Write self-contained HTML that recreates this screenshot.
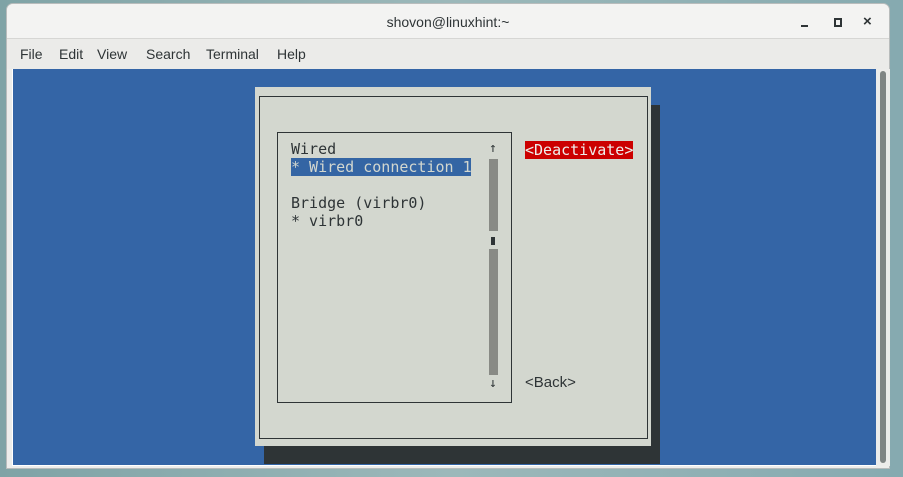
<!DOCTYPE html>
<html><head><meta charset="utf-8"><style>
*{margin:0;padding:0;box-sizing:border-box}
body{width:903px;height:477px;overflow:hidden;background:linear-gradient(90deg,#7fa3a6,#9cb8ba 50%,#86aab0);position:relative;font-family:"Liberation Sans",sans-serif}
.win{position:absolute;left:6px;top:3px;width:884px;height:466px;background:#ededeb;border-radius:7px 7px 0 0;overflow:hidden;border:1px solid #b8bcbc}
.title{position:absolute;left:0;top:0;width:100%;height:35px;background:#f3f3f2;border-bottom:1px solid #d6d6d4;text-align:center;font-size:14px;line-height:36px;color:#2e3436}
.menu{position:absolute;left:0;top:35px;width:100%;height:30px;background:#ebebe9;font-size:14px;color:#2e3436;line-height:30px}
.menu span{position:absolute}
.term{position:absolute;left:12px;top:69px;width:865px;height:397px;background:#3465a6;border:1px solid #fff;border-top:none}
.sb{position:absolute;left:876px;top:69px;width:14px;height:397px;background:#ececea}
.sb div{position:absolute;left:4px;top:2px;width:6px;height:392px;background:#7f8584;border-radius:3px}
.m{font-family:"DejaVu Sans Mono","Liberation Mono",monospace;font-size:15px;color:#2e3436;position:absolute;white-space:pre;line-height:18px}
</style></head><body>
<div class="win">
<div class="title">shovon@linuxhint:~
<div style="position:absolute;left:794px;top:21px;width:7px;height:2px;background:#2e3436"></div>
<div style="position:absolute;left:827px;top:14px;width:8px;height:9px;border:2px solid #2e3436"></div>
<div style="position:absolute;left:856px;top:10px;font-size:15px;line-height:16px;font-weight:bold">×</div>
</div>
<div class="menu"><span style="left:13px">File</span><span style="left:52px">Edit</span><span style="left:90px">View</span><span style="left:139px">Search</span><span style="left:199px">Terminal</span><span style="left:270px">Help</span></div>
</div>
<div class="term"></div>
<div class="sb"><div></div></div>
<div style="position:absolute;left:264px;top:105px;width:396px;height:359px;background:#2e3436"></div>
<div style="position:absolute;left:255px;top:87px;width:396px;height:359px;background:#d3d7cf"></div>
<div style="position:absolute;left:259px;top:96px;width:389px;height:343px;border:1px solid #2e3436"></div>
<div style="position:absolute;left:277px;top:132px;width:235px;height:271px;border:1px solid #2e3436"></div>
<div class="m" style="left:291px;top:140px">Wired</div>
<div class="m" style="left:291px;top:158px;background:#3465a4;color:#d3d7cf;width:180px">* Wired connection 1</div>
<div class="m" style="left:291px;top:194px">Bridge (virbr0)</div>
<div class="m" style="left:291px;top:212px">* virbr0</div>
<div class="m" style="left:489px;top:140px;font-size:13px">↑</div>
<div style="position:absolute;left:489px;top:159px;width:9px;height:72px;background:#888a85"></div>
<div style="position:absolute;left:491px;top:237px;width:4px;height:8px;background:#2e3436"></div>
<div style="position:absolute;left:489px;top:249px;width:9px;height:126px;background:#888a85"></div>
<div class="m" style="left:489px;top:375px;font-size:13px">↓</div>
<div class="m" style="left:525px;top:141px;background:#cc0000;color:#eeeeec;width:108px;height:18px">&lt;Deactivate&gt;</div>
<div style="position:absolute;left:525px;top:374px;font-size:15px;color:#2e3436;line-height:18px;font-family:'Liberation Sans',sans-serif">&lt;Back&gt;</div>
</body></html>
